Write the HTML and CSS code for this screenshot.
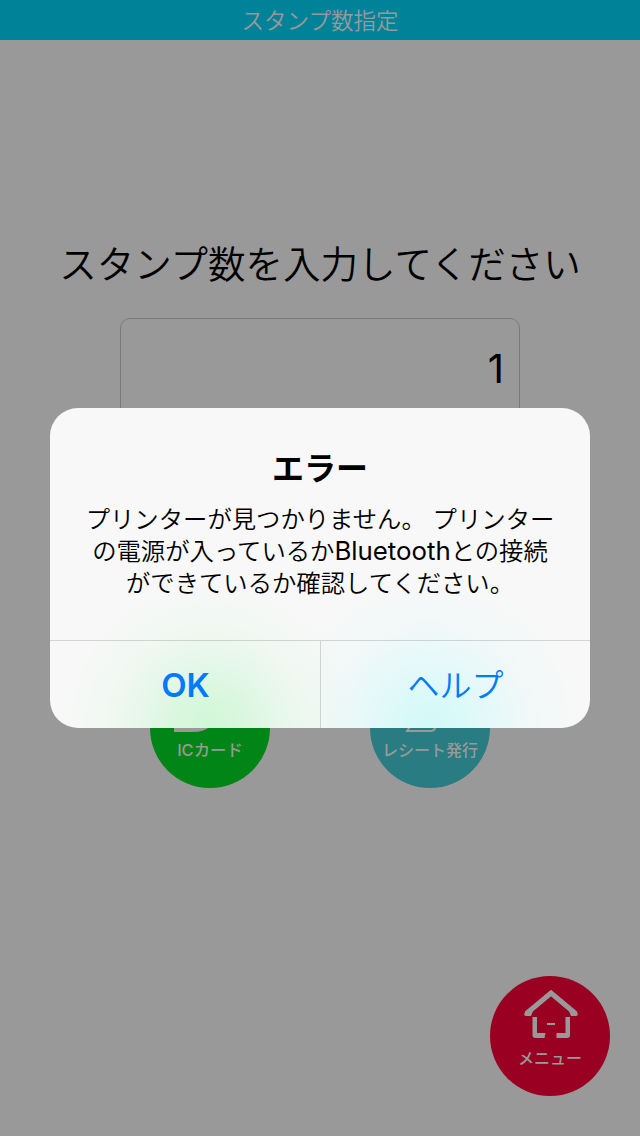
FILE: index.html
```html
<!DOCTYPE html>
<html lang="ja">
<head>
    <meta charset="UTF-8">
    <meta name="viewport" content="width=device-width, initial-scale=1.0">
    <title>スタンプ数指定</title>
    <link rel="stylesheet" href="styles.css">
</head>
<body>
    <div class="navbar">スタンプ数指定</div>

    <div class="container">
        <h1>スタンプ数を入力してください</h1>
        <div class="stamp-count">1</div>
        <div class="buttons">
            <div class="circle ic">
                <svg class="icon" width="72" height="44" viewBox="0 0 72 44">
                    <path d="M0 0H18Q42 0 42 22T18 44H0Z" fill="#999"/>
                </svg>
                <span>ICカード</span>
            </div>
            <div class="circle receipt">
                <svg class="icon" width="60" height="44" viewBox="0 0 60 44">
                    <path d="M12 0H36V35Q36 43 31 43H7L12 36Z" fill="none" stroke="#999" stroke-width="2"/>
                </svg>
                <span>レシート発行</span>
            </div>
        </div>
    </div>

    <div class="circle menu">
        <svg width="54" height="50" viewBox="0 0 54 50">
            <path d="M2.500 23.500L27 3L51.500 23.500" fill="none" stroke="#999" stroke-width="5"/>
            <path d="M1 22Q-1 26 2 26H7L9 21ZM53 22Q55 26 52 26H47L45 21Z" fill="#999"/>
            <path d="M8.500 27H13V43H21.500L20.500 48H11.500Q8.500 48 8.500 45ZM46 27H41.500V43H32.500V48H43Q46 48 46 45Z" fill="#999"/>
            <path d="M23 33H31V35H23Z" fill="#999"/>
        </svg>
        <span>メニュー</span>
    </div>

    <div class="overlay">
        <div class="dialog">
            <div class="dialog-body">
                <h2>エラー</h2>
                <p>プリンターが見つかりません。 プリンター<br>の電源が入っているか<span class="latin">Bluetooth</span>との接続<br>ができているか確認してください。</p>
            </div>
            <div class="dialog-buttons">
                <div class="button ok">OK</div>
                <div class="button help">ヘルプ</div>
            </div>
        </div>
    </div>
</body>
</html>
```
FILE: styles.css
```css
* {
    box-sizing: border-box;
}
body {
    font-family: Inter, "Noto Sans CJK JP", sans-serif;
    background-color: #999;
    margin: 0;
    height: 1136px;
    overflow: hidden;
    text-align: center;
}
.navbar {
    height: 40px;
    line-height: 41px;
    font-size: 22.5px;
    font-weight: 350;
    color: #999;
    background-color: #008299;
}
.container {
    display: flex;
    flex-direction: column;
    align-items: center;
}
h1 {
    margin: 197px 0 0;
    height: 56px;
    line-height: 56px;
    font-size: 37.5px;
    font-weight: 350;
    white-space: nowrap;
}
.stamp-count {
    width: 400px;
    height: 100px;
    margin-top: 25px;
    padding-right: 15px;
    border: 1px solid #7a7a7a;
    border-radius: 10px;
    text-align: right;
    font-size: 40px;
    line-height: 99px;
}
.buttons {
    display: flex;
    gap: 100px;
    margin-top: 250px;
}
.circle {
    display: flex;
    flex-direction: column;
    align-items: center;
    width: 120px;
    height: 120px;
    border-radius: 50%;
    color: #999;
    font-size: 16px;
    font-weight: 500;
    line-height: 24px;
    white-space: nowrap;
}
.icon {
    margin: 20px 0 6px;
}
.ic {
    background-color: #008516;
}
.ic span {
    font-size: 16.4px;
}
.receipt {
    background-color: #297c82;
}
.menu {
    position: absolute;
    right: 30px;
    bottom: 40px;
    padding-top: 14px;
    background-color: #990022;
}
.menu svg {
    margin-left: 2px;
}
.menu span {
    margin-top: 6px;
}
.overlay {
    position: absolute;
    top: 0;
    left: 0;
    width: 640px;
    height: 1136px;
    display: flex;
    align-items: center;
    justify-content: center;
}
.dialog {
    width: 540px;
    height: 320px;
    border-radius: 28px;
    overflow: hidden;
    background-color: #f8f8f8;
    background-image:
        radial-gradient(circle at 160px 320px, rgba(208, 247, 215, 1) 0, rgba(212, 247, 218, 0.85) 35px, rgba(216, 247, 222, 0.55) 70px, rgba(220, 247, 225, 0.23) 105px, rgba(230, 248, 232, 0) 150px),
        radial-gradient(circle at 380px 320px, rgba(211, 249, 248, 1) 0, rgba(214, 249, 249, 0.85) 35px, rgba(218, 249, 249, 0.55) 70px, rgba(222, 248, 249, 0.23) 105px, rgba(230, 248, 249, 0) 150px);
}
.dialog-body {
    height: 232px;
    padding-top: 39px;
}
h2 {
    margin: 0;
    font-size: 32px;
    font-weight: 700;
    line-height: 44px;
}
p {
    margin: 12px 0 0;
    font-size: 24.35px;
    font-weight: 350;
    line-height: 32px;
    white-space: nowrap;
}
.latin {
    font-size: 25.8px;
    font-weight: 400;
    line-height: 1;
}
.dialog-buttons {
    display: flex;
    height: 88px;
    border-top: 1px solid rgba(0, 40, 30, 0.16);
}
.button {
    flex: 1;
    line-height: 89px;
    color: #007aff;
    font-size: 33px;
}
.ok {
    padding-left: 1px;
    font-weight: 600;
}
.help {
    border-left: 1px solid rgba(0, 40, 30, 0.16);
    font-weight: 350;
    font-size: 32px;
}
```
